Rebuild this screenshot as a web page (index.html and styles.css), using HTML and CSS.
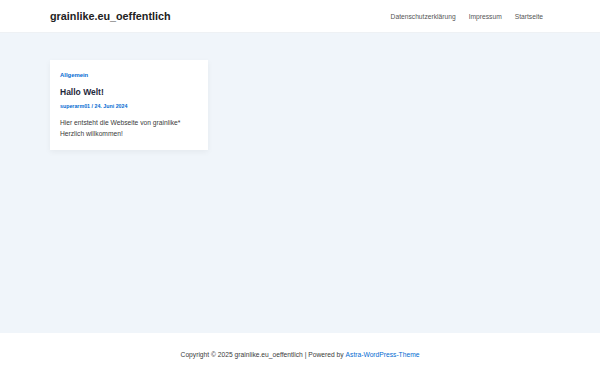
FILE: index.html
```html
<!DOCTYPE html>
<html lang="de">
<head>
  <meta charset="UTF-8" />
  <title>grainlike.eu_oeffentlich</title>
  <link rel="stylesheet" href="styles.css">
</head>
<body>
  <header class="site-header">
    <div class="wrap header-inner">
      <a class="site-title" href="#">grainlike.eu_oeffentlich</a>
      <nav class="main-nav">
        <a href="#">Datenschutzerklärung</a>
        <a href="#">Impressum</a>
        <a href="#">Startseite</a>
      </nav>
    </div>
  </header>

  <main class="site-content">
    <div class="wrap">
      <article class="post-card">
        <a class="cat" href="#">Allgemein</a>
        <h2 class="post-title">Hallo Welt!</h2>
        <div class="meta"><a href="#">superarm01</a> / <span>24. Juni 2024</span></div>
        <p class="excerpt">Hier entsteht die Webseite von grainlike*<br>Herzlich willkommen!</p>
      </article>
    </div>
  </main>

  <footer class="site-footer">
    Copyright © 2025 grainlike.eu_oeffentlich | Powered by <a href="#">Astra-WordPress-Theme</a>
  </footer>
</body>
</html>
```

FILE: styles.css
```css
html, body {
  margin: 0;
  height: 100%;
}
body {
  display: flex;
  flex-direction: column;
  font-family: "Liberation Sans", Arial, sans-serif;
  color: #334155;
  background: #f0f5fa;
}
a {
  text-decoration: none;
}
.wrap {
  padding: 0 50px;
}
.site-header {
  background: #fff;
  height: 33px;
  border-bottom: 1px solid #eef1f4;
  box-sizing: border-box;
}
.header-inner {
  display: flex;
  align-items: center;
  justify-content: space-between;
  height: 100%;
  padding-right: 57px;
}
.site-title {
  font-size: 10.8px;
  font-weight: bold;
  color: #222;
}
.main-nav {
  display: flex;
  gap: 13px;
}
.main-nav a {
  font-size: 6.7px;
  color: #555;
}
.site-content {
  flex: 1;
  padding-top: 27px;
}
.post-card {
  width: 158px;
  box-sizing: border-box;
  background: #fff;
  padding: 12px 10px 11px;
  box-shadow: 0 2px 6px rgba(0, 0, 0, 0.05);
}
.cat {
  display: block;
  font-size: 5.9px;
  font-weight: bold;
  color: #046bd2;
}
.post-title {
  margin: 9px 0 6px;
  font-size: 8.5px;
  color: #1e293b;
}
.meta {
  font-size: 5.3px;
  font-weight: bold;
  color: #046bd2;
}
.meta a {
  color: #046bd2;
}
.excerpt {
  margin: 8px 0 0;
  font-size: 6.7px;
  line-height: 11px;
  color: #3a3a3a;
}
.site-footer {
  background: #fff;
  height: 42px;
  display: flex;
  align-items: center;
  justify-content: center;
  font-size: 6.7px;
  color: #3a3a3a;
}
.site-footer a {
  color: #046bd2;
  margin-left: 2px;
}
```
